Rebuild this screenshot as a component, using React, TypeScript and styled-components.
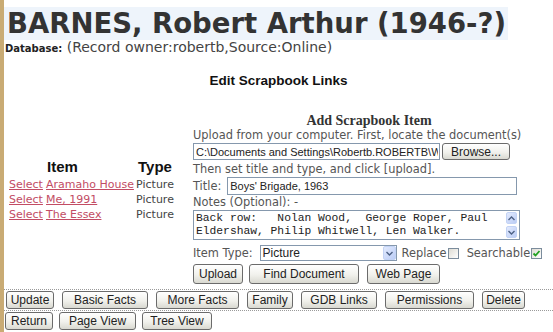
import React from 'react';
import styled, { createGlobalStyle } from 'styled-components';

const GlobalStyle = createGlobalStyle`
  html, body {
    margin: 0;
    padding: 0;
    background: #ffffff;
  }
  body {
    font-family: "DejaVu Sans", Verdana, sans-serif;
    color: #444;
  }
`;

const Page = styled.div`
  display: flex;
  width: 553px;
  height: 332px;
  overflow: hidden;
`;

const SideStrip = styled.div`
  flex: none;
  width: 4px;
  background: #c9ab74;
`;

const Main = styled.div`
  flex: 1;
  min-width: 0;
`;

const Heading = styled.h1`
  box-sizing: border-box;
  width: 504px;
  height: 33px;
  margin: 7px 0 0;
  padding-left: 3px;
  background: #eef4fb;
  color: #333;
  font: bold 27.5px/33px "DejaVu Sans", Verdana, sans-serif;
  white-space: nowrap;
`;

const DbLine = styled.div`
  padding-left: 1px;
  font-size: 14px;
  line-height: 14px;
  color: #444;
  white-space: nowrap;
`;

const DbLabel = styled.span`
  font-size: 10px;
  font-weight: bold;
  color: #222;
`;

const PageTitle = styled.div`
  margin-top: 17px;
  text-align: center;
  font: bold 13.5px/16px "Liberation Sans", Arial, sans-serif;
  color: #111;
`;

const Content = styled.div`
  display: grid;
  grid-template-columns: 189px 352px;
  align-items: start;
  margin-top: 25px;
`;

const ItemTable = styled.div`
  display: grid;
  grid-template-columns: 37px 89px 40px;
  margin: 44px 0 0 5px;
  font-size: 11px;
  line-height: 15px;
`;

const HeadCell = styled.div<{ $center?: boolean }>`
  height: 19px;
  font: bold 15px/17px "Liberation Sans", Arial, sans-serif;
  color: #111;
  text-align: ${p => (p.$center ? 'center' : 'left')};
  padding-left: ${p => (p.$center ? 0 : 1)}px;
`;

const ItemLink = styled.a`
  color: #c24c64;
  text-decoration: underline;
  white-space: nowrap;
  cursor: pointer;
`;

const TypeCell = styled.span`
  color: #444;
  white-space: nowrap;
  text-align: center;
`;

const Form = styled.div`
  display: flex;
  flex-direction: column;
  align-items: flex-start;
  font-size: 11.4px;
  line-height: 14px;
  color: #555;
`;

const FormHeading = styled.div`
  align-self: stretch;
  text-align: center;
  font: bold 14px/14px "Liberation Serif", "Times New Roman", serif;
  color: #333;
`;

const FormText = styled.div<{ $gap?: number }>`
  margin-top: ${p => p.$gap ?? 0}px;
  white-space: nowrap;
`;

const FieldRow = styled.div<{ $gap: number; $h: number }>`
  display: flex;
  align-items: center;
  margin-top: ${p => p.$gap}px;
  height: ${p => p.$h}px;
  white-space: nowrap;
`;

const Label = styled.span<{ $ml?: number }>`
  margin-left: ${p => p.$ml ?? 0}px;
  color: #555;
`;

const TextInput = styled.input<{ $w: number; $ml?: number }>`
  box-sizing: border-box;
  width: ${p => p.$w}px;
  height: 100%;
  margin: 0 0 0 ${p => p.$ml ?? 0}px;
  padding: 0 1px 0 2px;
  border: 1px solid #8598ad;
  background: #fff;
  font: 11px "Liberation Sans", Arial, sans-serif;
  color: #222;
  outline: none;
`;

const Button = styled.button<{ $w: number; $h?: number; $ml?: number }>`
  box-sizing: border-box;
  width: ${p => p.$w}px;
  height: ${p => p.$h ?? 18}px;
  margin: 0 0 0 ${p => p.$ml ?? 0}px;
  padding: 0;
  border: 1px solid #6b6b6b;
  border-radius: 3px;
  background: linear-gradient(#ffffff, #f1f1ec 55%, #d9d9d1);
  font: 12px "Liberation Sans", Arial, sans-serif;
  color: #222;
  white-space: nowrap;
  cursor: pointer;
`;

const NotesBox = styled.div`
  display: flex;
  box-sizing: border-box;
  width: 327px;
  height: 30px;
  margin-top: 1px;
  border: 1px solid #8598ad;
  background: #fff;
`;

const NotesText = styled.div`
  flex: 1;
  padding: 1px 2px;
  font: 11.3px/13px "Liberation Mono", "Courier New", monospace;
  color: #222;
  white-space: pre;
  overflow: hidden;
`;

const ScrollTrack = styled.div`
  flex: none;
  display: flex;
  flex-direction: column;
  justify-content: space-between;
  width: 12px;
  padding: 1px 1px 1px 0;
`;

const ArrowBox = styled.span`
  display: flex;
  align-items: center;
  justify-content: center;
  box-sizing: border-box;
  width: 11px;
  height: 12px;
  border: 1px solid #c3d3f5;
  border-radius: 2px;
  background: linear-gradient(135deg, #e2eafd, #bccdf6);
`;

const SelectBox = styled.div<{ $ml: number }>`
  display: flex;
  align-items: center;
  box-sizing: border-box;
  width: 137px;
  height: 16px;
  margin-left: ${p => p.$ml}px;
  border: 1px solid #8598ad;
  background: #fff;
`;

const SelectValue = styled.span`
  flex: 1;
  padding-left: 2px;
  font: 12px/14px "Liberation Sans", Arial, sans-serif;
  color: #222;
`;

const SelectArrow = styled(ArrowBox)`
  width: 13px;
  height: 14px;
`;

const CheckBox = styled.span<{ $ml?: number }>`
  display: inline-flex;
  align-items: center;
  justify-content: center;
  box-sizing: border-box;
  width: 11px;
  height: 11px;
  margin-left: ${p => p.$ml ?? 0}px;
  border: 1px solid #7b8c9c;
  background: linear-gradient(135deg, #dedcd4, #ffffff);
`;

const Toolbar = styled.div`
  display: flex;
  margin-top: 5px;
  padding: 1px 0 1px 2px;
  border-top: 1px dotted #9a9a9a;
  border-bottom: 1px dotted #9a9a9a;
`;

const ToolRow = styled.div`
  display: flex;
  margin-top: 1px;
  padding-left: 1px;
`;

const Chevron = ({ up }: { up?: boolean }) => (
  <svg width="7" height="5" viewBox="0 0 7 5">
    <path
      d={up ? 'M0.5 4 L3.5 1 L6.5 4' : 'M0.5 1 L3.5 4 L6.5 1'}
      fill="none"
      stroke="#4d6185"
      strokeWidth="1.4"
    />
  </svg>
);

const items = [
  { name: 'Aramaho House', type: 'Picture' },
  { name: 'Me, 1991', type: 'Picture' },
  { name: 'The Essex', type: 'Picture' },
];

const toolRow1 = [
  { label: 'Update', w: 48, ml: 0 },
  { label: 'Basic Facts', w: 86, ml: 8 },
  { label: 'More Facts', w: 83, ml: 8 },
  { label: 'Family', w: 46, ml: 8 },
  { label: 'GDB Links', w: 76, ml: 8 },
  { label: 'Permissions', w: 89, ml: 8 },
  { label: 'Delete', w: 43, ml: 8 },
];

const toolRow2 = [
  { label: 'Return', w: 48, ml: 0 },
  { label: 'Page View', w: 77, ml: 6 },
  { label: 'Tree View', w: 70, ml: 6 },
];

const App: React.FC = () => {
  return (
    <>
      <GlobalStyle />
      <Page>
        <SideStrip />
        <Main>
          <Heading>BARNES, Robert Arthur (1946-?)</Heading>
          <DbLine>
            <DbLabel>Database:</DbLabel> (Record owner:robertb,Source:Online)
          </DbLine>
          <PageTitle>Edit Scrapbook Links</PageTitle>

          <Content>
            <ItemTable>
              <HeadCell />
              <HeadCell>Item</HeadCell>
              <HeadCell $center>Type</HeadCell>
              {items.map(item => (
                <React.Fragment key={item.name}>
                  <ItemLink>Select</ItemLink>
                  <ItemLink>{item.name}</ItemLink>
                  <TypeCell>{item.type}</TypeCell>
                </React.Fragment>
              ))}
            </ItemTable>

            <Form>
              <FormHeading>Add Scrapbook Item</FormHeading>
              <FormText>Upload from your computer. First, locate the document(s)</FormText>
              <FieldRow $gap={1} $h={17}>
                <TextInput $w={247} readOnly value="C:\Documents and Settings\Robertb.ROBERTB\W" />
                <Button $w={68} $h={17} $ml={2}>Browse...</Button>
              </FieldRow>
              <FormText $gap={2}>Then set title and type, and click [upload].</FormText>
              <FieldRow $gap={1} $h={18}>
                <Label>Title:</Label>
                <TextInput $w={290} $ml={6} readOnly value="Boys' Brigade, 1963" />
              </FieldRow>
              <FormText>Notes (Optional): -</FormText>
              <NotesBox>
                <NotesText>
                  {'Back row:   Nolan Wood,  George Roper, Paul\nEldershaw, Philip Whitwell, Len Walker.'}
                </NotesText>
                <ScrollTrack>
                  <ArrowBox><Chevron up /></ArrowBox>
                  <ArrowBox><Chevron /></ArrowBox>
                </ScrollTrack>
              </NotesBox>
              <FieldRow $gap={5} $h={16}>
                <Label>Item Type:</Label>
                <SelectBox $ml={7}>
                  <SelectValue>Picture</SelectValue>
                  <SelectArrow><Chevron /></SelectArrow>
                </SelectBox>
                <Label $ml={5}>Replace</Label>
                <CheckBox $ml={1} />
                <Label $ml={8}>Searchable</Label>
                <CheckBox $ml={1}>
                  <svg width="9" height="9" viewBox="0 0 9 9">
                    <path d="M1.5 4.5 L3.5 6.5 L7.5 2" fill="none" stroke="#21a121" strokeWidth="1.8" />
                  </svg>
                </CheckBox>
              </FieldRow>
              <FieldRow $gap={3} $h={20}>
                <Button $w={50} $h={20}>Upload</Button>
                <Button $w={110} $h={20} $ml={6}>Find Document</Button>
                <Button $w={73} $h={20} $ml={8}>Web Page</Button>
              </FieldRow>
            </Form>
          </Content>

          <Toolbar>
            {toolRow1.map(b => (
              <Button key={b.label} $w={b.w} $ml={b.ml}>{b.label}</Button>
            ))}
          </Toolbar>
          <ToolRow>
            {toolRow2.map(b => (
              <Button key={b.label} $w={b.w} $ml={b.ml}>{b.label}</Button>
            ))}
          </ToolRow>
        </Main>
      </Page>
    </>
  );
};

export default App;
